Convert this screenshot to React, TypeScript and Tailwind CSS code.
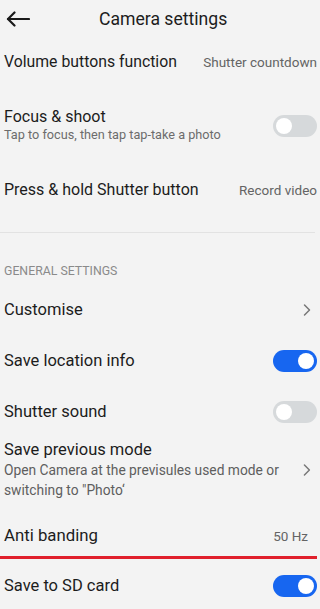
import { ChevronRight } from "lucide-react";

const font = { fontFamily: "Roboto, 'Noto Sans', sans-serif" };

function Toggle({ on }: { on: boolean }) {
  return (
    <span
      className={`flex h-[22px] w-[44px] shrink-0 items-center rounded-full px-[3px] ${
        on ? "justify-end bg-[#1766f0]" : "justify-start bg-[#d6d9db]"
      }`}
    >
      <span className="h-[16px] w-[16px] rounded-full bg-white" />
    </span>
  );
}

function ValueRow({ label, value, h, size = "text-[16px]" }: { label: string; value: string; h: string; size?: string }) {
  return (
    <div className={`flex ${h} items-center justify-between pl-[4px] pr-[3px]`}>
      <span className={`${size} text-[#1c1c1c]`}>{label}</span>
      <span className="text-[13.5px] text-[#646464]">{value}</span>
    </div>
  );
}

function ToggleRow({ label, on, h }: { label: string; on: boolean; h: string }) {
  return (
    <div className={`flex ${h} items-center justify-between pl-[4px] pr-[3px]`}>
      <span className="text-[16.5px] text-[#1c1c1c]">{label}</span>
      <Toggle on={on} />
    </div>
  );
}

export default function App() {
  return (
    <div style={font} className="h-[609px] w-[320px] overflow-hidden bg-[#f3f3f3]">
      {/* header */}
      <div className="flex h-[38px] items-center">
        <div className="flex w-[99px] items-center pl-[6px]">
          <svg width="24" height="16" viewBox="0 0 24 16" fill="none" stroke="#1a1a1a" strokeWidth="2.2" strokeLinecap="round" strokeLinejoin="round">
            <path d="M23 8H2" />
            <path d="M8.5 1.5 2 8l6.5 6.5" />
          </svg>
        </div>
        <span className="text-[17.6px] text-[#1c1c1c]">Camera settings</span>
      </div>

      <ValueRow label="Volume buttons function" value="Shutter countdown" h="h-[48px]" size="text-[15.8px]" />

      <div className="flex h-[80px] items-center justify-between pl-[4px] pr-[3px]">
        <div className="flex flex-col">
          <span className="text-[16px] leading-[18px] text-[#1c1c1c]">Focus &amp; shoot</span>
          <span className="text-[12.7px] leading-[18px] text-[#6c6c6c]">Tap to focus, then tap tap-take a photo</span>
        </div>
        <Toggle on={false} />
      </div>

      <ValueRow label="Press & hold Shutter button" value="Record video" h="h-[48px]" />

      <div className="h-[18px]" />
      <div className="mr-[5px] h-px bg-[#e2e2e2]" />

      <div className="h-[52px] pl-[4px] pt-[30px]">
        <span className="block text-[12.3px] leading-[16px] text-[#8a8a8a]">GENERAL SETTINGS</span>
      </div>

      <div className="flex h-[50px] items-center justify-between pl-[4px] pr-[3px]">
        <span className="text-[16.5px] text-[#1c1c1c]">Customise</span>
        <ChevronRight size={20} strokeWidth={1.8} className="text-[#777777]" />
      </div>

      <ToggleRow label="Save location info" on h="h-[52px]" />
      <ToggleRow label="Shutter sound" on={false} h="h-[50px]" />

      <div className="flex h-[66px] items-center justify-between pl-[4px] pr-[3px]">
        <div className="flex w-[296px] flex-col">
          <span className="text-[16.5px] leading-[20px] text-[#1c1c1c]">Save previous mode</span>
          <span className="text-[13.8px] leading-[20px] text-[#5e5e5e]">
            Open Camera at the previsules used mode or switching to "Photo‘
          </span>
        </div>
        <ChevronRight size={20} strokeWidth={1.8} className="text-[#777777]" />
      </div>

      <div className="flex h-[53px] items-center justify-between pl-[4px] pr-[12px] pt-[13px]">
        <span className="text-[16.8px] text-[#1c1c1c]">Anti banding</span>
        <span className="text-[13.5px] text-[#646464]">50 Hz</span>
      </div>

      <div className="mr-[3px] h-[3px] bg-[#e0202c]" />

      <ToggleRow label="Save to SD card" on h="h-[54px]" />
    </div>
  );
}
